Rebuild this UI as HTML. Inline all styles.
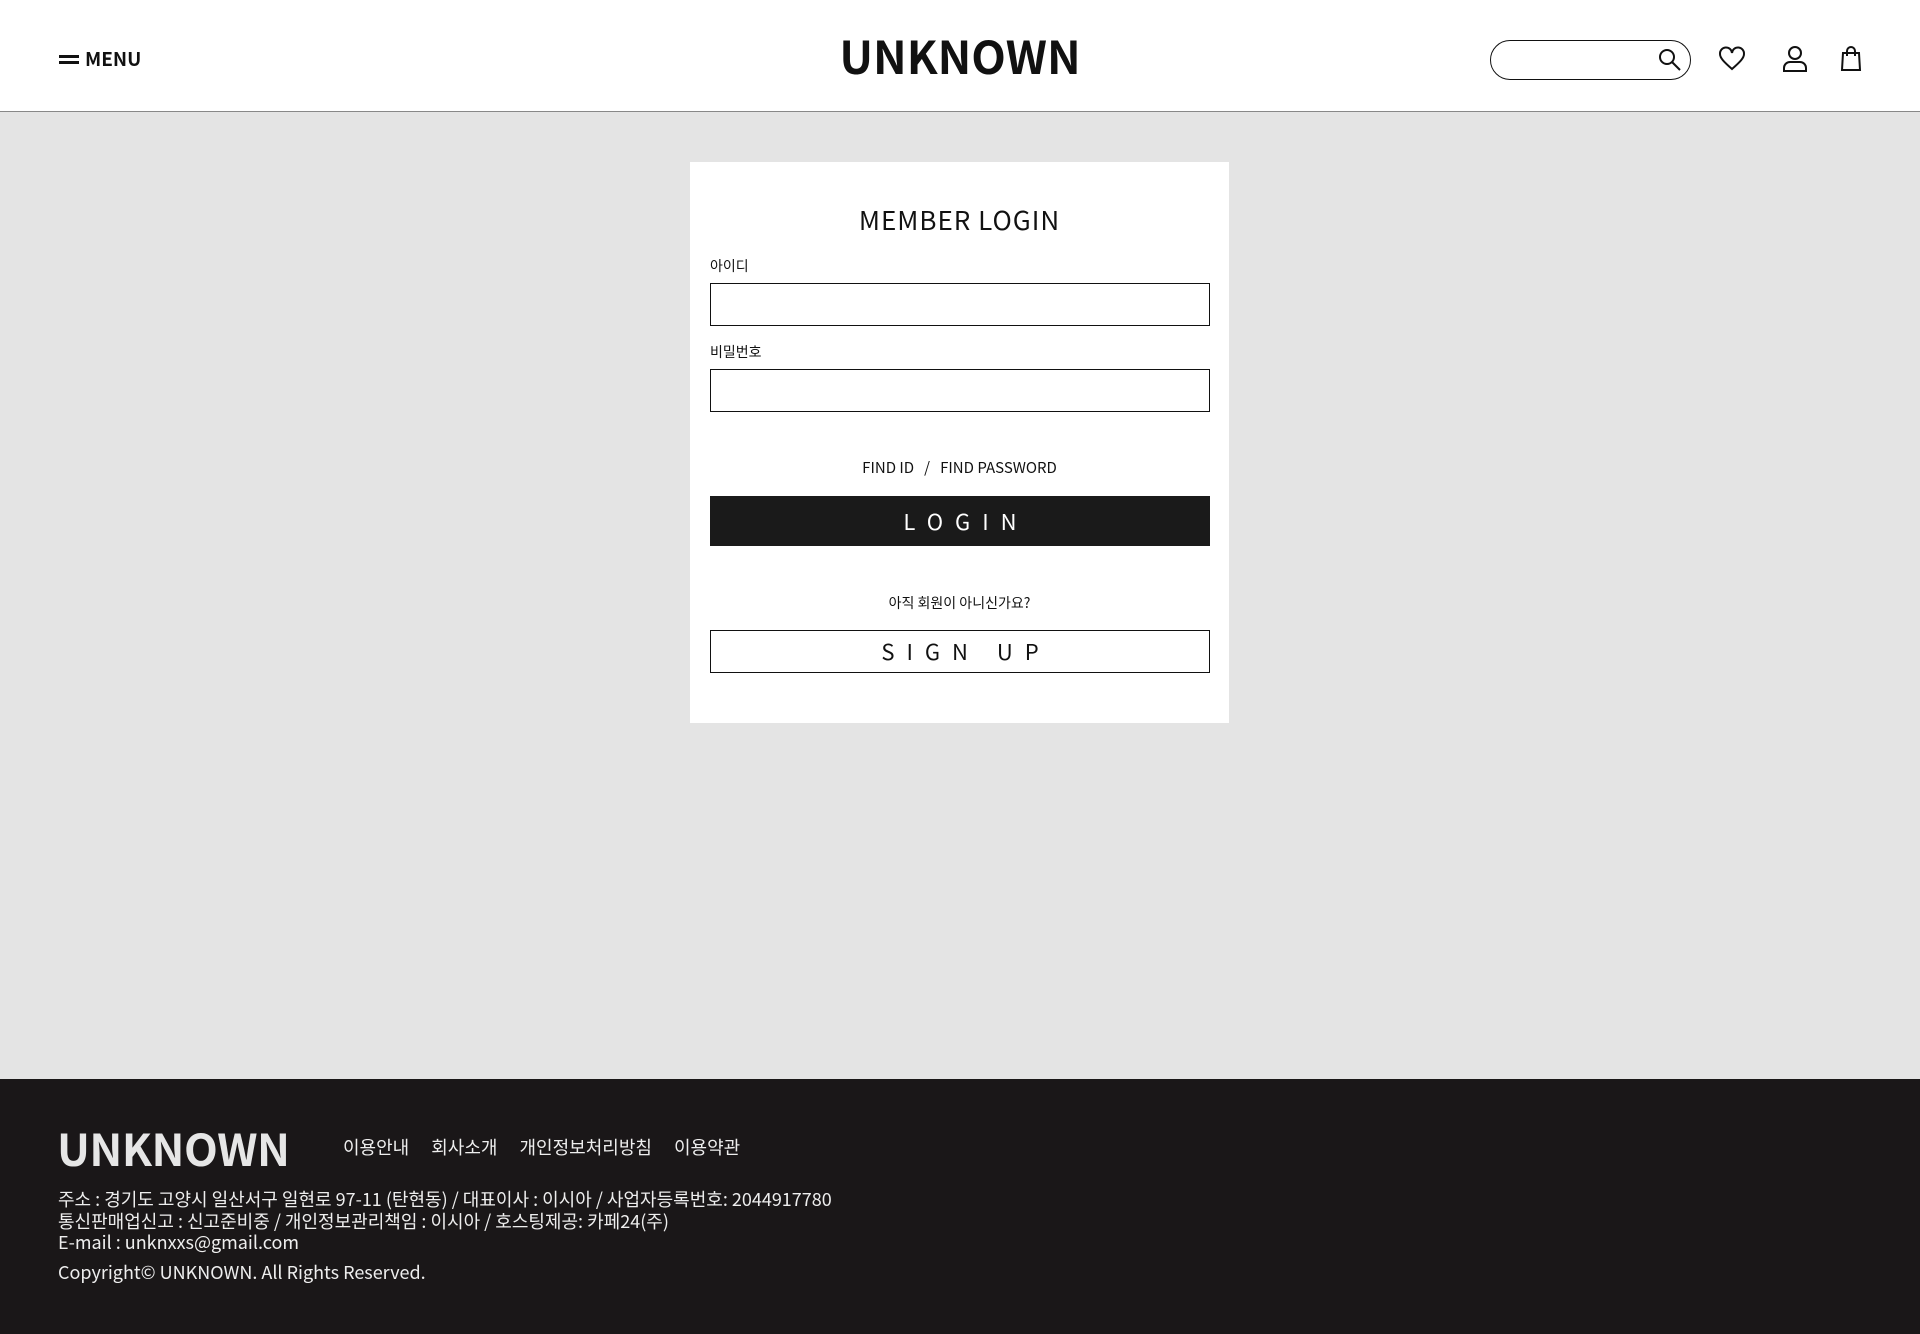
<!DOCTYPE html>
<html><head><meta charset="utf-8"><style>
*{margin:0;padding:0;box-sizing:border-box}
body{width:1920px;height:1334px;background:#e4e4e4;font-family:"Noto Sans CJK KR","Liberation Sans",sans-serif;color:#111;position:relative;overflow:hidden;line-height:1.2}
header{position:absolute;left:0;top:0;width:1920px;height:112px;background:#fff;border-bottom:1px solid #888}
.menu{position:absolute;left:59px;top:48px;font-weight:bold;font-size:19px;display:flex;align-items:center}
.menu i{display:inline-block;width:20px;height:9px;border-top:3px solid #111;border-bottom:3px solid #111;margin-right:6px}
.logo{position:absolute;left:0;width:1920px;text-align:center;top:28px;font-weight:bold;font-size:45px;letter-spacing:0}
.search{position:absolute;left:1490px;top:40px;width:201px;height:40px;border:1px solid #111;border-radius:20px}
.ic{position:absolute}
.card{position:absolute;left:690px;top:162px;width:539px;height:561px;background:#fff}
.title{position:absolute;top:42px;width:100%;text-align:center;font-size:26px;letter-spacing:1px}
.lbl{position:absolute;left:20px;font-size:14px}
.inp{position:absolute;left:20px;width:500px;height:43px;border:1px solid #111}
.find{position:absolute;top:297px;width:100%;text-align:center;font-size:15px}
.btn{position:absolute;left:20px;width:500px;display:flex;align-items:center;justify-content:center;font-size:22px;letter-spacing:12px;text-indent:12px}
footer{position:absolute;left:0;top:1079px;width:1920px;height:255px;background:#1a1718;color:#eee}
.flogo{position:absolute;left:57px;top:42px;font-weight:bold;font-size:44px;color:#e6e6e6;letter-spacing:-0.5px}
.links{position:absolute;left:343px;top:58px;font-size:18px}
.links span{margin-right:22px}
.addr{position:absolute;left:58px;top:110px;font-size:18px;line-height:21.5px}
</style></head><body>
<header>
<div class="menu"><i></i>MENU</div>
<div class="logo">UNKNOWN</div>
<div class="search"></div>
<svg class="ic" style="left:1658px;top:48px" width="24" height="24" viewBox="0 0 24 24" fill="none" stroke="#111" stroke-width="2"><circle cx="9" cy="9" r="7"/><path d="M14 14l8 8"/></svg>
<svg class="ic" style="left:1718px;top:46px" width="28" height="26" viewBox="0 0 28 26" fill="none" stroke="#111" stroke-width="2"><path d="M14 23C6 16 2 12 2 8a6 6 0 0 1 12-1 6 6 0 0 1 12 1c0 4-4 8-12 15z"/></svg>
<svg class="ic" style="left:1782px;top:45px" width="26" height="27" viewBox="0 0 26 27" fill="none" stroke="#111" stroke-width="2"><circle cx="13" cy="8" r="6"/><path d="M2 26v-3a6 6 0 0 1 6-6h10a6 6 0 0 1 6 6v3z"/></svg>
<svg class="ic" style="left:1840px;top:45px" width="22" height="26" viewBox="0 0 22 26" fill="none" stroke="#111" stroke-width="2"><path d="M3 8h16l1 17H2z"/><path d="M7 11V6a4 4 0 0 1 8 0v5"/></svg>
</header>
<div class="card">
<div class="title">MEMBER LOGIN</div>
<div class="lbl" style="top:96px">아이디</div>
<div class="inp" style="top:121px"></div>
<div class="lbl" style="top:182px">비밀번호</div>
<div class="inp" style="top:207px"></div>
<div class="find">FIND ID &nbsp;&nbsp;/&nbsp;&nbsp; FIND PASSWORD</div>
<div class="btn" style="top:334px;height:50px;background:#1a1a1a;color:#fff">LOGIN</div>
<div class="find" style="top:433px;font-size:14px">아직 회원이 아니신가요?</div>
<div class="btn" style="top:468px;height:43px;border:1px solid #111">SIGN UP</div>
</div>
<footer>
<div class="flogo">UNKNOWN</div>
<div class="links"><span>이용안내</span><span>회사소개</span><span>개인정보처리방침</span><span>이용약관</span></div>
<div class="addr">주소 : 경기도 고양시 일산서구 일현로 97-11 (탄현동) / 대표이사 : 이시아 / 사업자등록번호: 2044917780<br>통신판매업신고 : 신고준비중 / 개인정보관리책임 : 이시아 / 호스팅제공: 카페24(주)<br>E-mail : unknxxs@gmail.com<br><span style="display:block;margin-top:8px">Copyright© UNKNOWN. All Rights Reserved.</span></div>
</footer>
</body></html>
